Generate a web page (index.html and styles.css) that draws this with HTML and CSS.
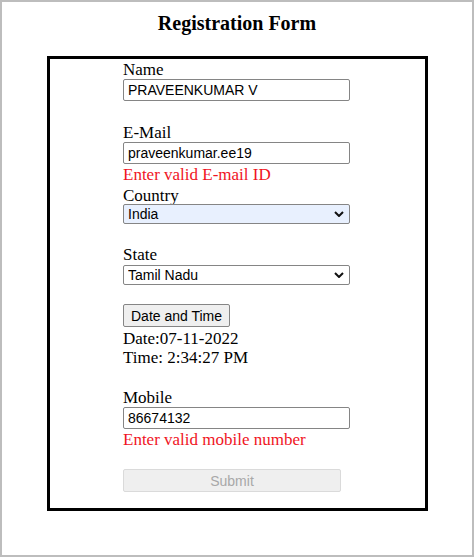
FILE: index.html
```html
<!DOCTYPE html>
<html lang="en">
<head>
<meta charset="utf-8">
<title>Registration Form</title>
<link rel="stylesheet" href="styles.css">
</head>
<body>
<div class="page">
  <h1 class="title">Registration Form</h1>
  <div class="box">
    <form class="form">
      <label class="label" for="name">Name</label>
      <input class="field" id="name" type="text" value="PRAVEENKUMAR V">

      <label class="label gap-lg" for="email">E-Mail</label>
      <input class="field" id="email" type="text" value="praveenkumar.ee19">
      <span class="error err-email">Enter valid E-mail ID</span>

      <label class="label label-short lbl-country" for="country">Country</label>
      <div class="select-wrap">
        <select class="select select-fill" id="country">
          <option>India</option>
        </select>
        <svg class="chev" width="10" height="6" viewBox="0 0 10 6" aria-hidden="true"><path d="M1 1 L5 5 L9 1" fill="none" stroke="#111" stroke-width="2"/></svg>
      </div>

      <label class="label lbl-state" for="state">State</label>
      <div class="select-wrap sel-state">
        <select class="select" id="state">
          <option>Tamil Nadu</option>
        </select>
        <svg class="chev" width="10" height="6" viewBox="0 0 10 6" aria-hidden="true"><path d="M1 1 L5 5 L9 1" fill="none" stroke="#111" stroke-width="2"/></svg>
      </div>

      <button class="btn" type="button">Date and Time</button>
      <span class="line line-date">Date:07-11-2022</span>
      <span class="line">Time: 2:34:27 PM</span>

      <label class="label lbl-mobile" for="mobile">Mobile</label>
      <input class="field fld-mobile" id="mobile" type="text" value="86674132">
      <span class="error err-mobile">Enter valid mobile number</span>

      <button class="submit" type="submit" disabled>Submit</button>
    </form>
  </div>
</div>
</body>
</html>
```

FILE: styles.css
```css
html, body {
  margin: 0;
  padding: 0;
  background: #ffffff;
}

.page {
  box-sizing: border-box;
  width: 474px;
  height: 557px;
  border: 2px solid #bdbdbd;
  font-family: "Liberation Serif", "Times New Roman", serif;
  color: #000;
}

.title {
  margin: 10px 0 21px 0;
  font-size: 20px;
  line-height: 23px;
  font-weight: bold;
  text-align: center;
}

.box {
  box-sizing: border-box;
  width: 381px;
  margin-left: 45px;
  border: 3px solid #000;
  padding: 1px 0 16px 73px;
}

.form {
  display: flex;
  flex-direction: column;
  align-items: flex-start;
  width: 227px;
  font-size: 17px;
  line-height: 19px;
}

.label,
.line,
.error {
  display: block;
  height: 19px;
}

.label-short {
  height: 18px;
}

.error {
  color: #f0141e;
}

.gap-lg { margin-top: 22px; }
.err-email { margin-top: 1px; }
.lbl-country { margin-top: 2px; }
.lbl-state { margin-top: 21px; }
.sel-state { margin-top: 1px; }
.line-date { margin-top: 2px; }
.lbl-mobile { margin-top: 21px; }
.fld-mobile { margin-top: 1px; }
.err-mobile { margin-top: 1px; }

.field {
  box-sizing: border-box;
  width: 227px;
  height: 22px;
  margin: 0;
  padding: 1px 4px;
  border: 1px solid #858585;
  border-radius: 2px;
  font-family: "Liberation Sans", Arial, sans-serif;
  font-size: 14px;
  color: #000;
  background: #fff;
}

.select-wrap {
  position: relative;
  width: 227px;
  height: 20px;
}

.select {
  display: block;
  box-sizing: border-box;
  width: 227px;
  height: 20px;
  margin: 0;
  padding: 0 0 0 4px;
  border: 1px solid #858585;
  border-radius: 2px;
  -webkit-appearance: none;
  appearance: none;
  font-family: "Liberation Sans", Arial, sans-serif;
  font-size: 14px;
  line-height: 18px;
  color: #000;
  background-color: #fff;
}

.select-fill {
  background-color: #e8f0fe;
}

.chev {
  position: absolute;
  right: 6px;
  top: 7px;
  pointer-events: none;
}

.btn {
  box-sizing: border-box;
  height: 23px;
  margin: 19px 0 0 0;
  padding: 1px 7px;
  border: 1px solid #858585;
  border-radius: 2px;
  background: #efefef;
  font-family: "Liberation Sans", Arial, sans-serif;
  font-size: 14px;
  color: #000;
}

.submit {
  box-sizing: border-box;
  width: 218px;
  height: 23px;
  margin: 20px 0 0 0;
  padding: 1px 6px;
  border: 1px solid #dadada;
  border-radius: 2px;
  background: #efefef;
  font-family: "Liberation Sans", Arial, sans-serif;
  font-size: 14px;
  color: #a8a8a8;
}
```
